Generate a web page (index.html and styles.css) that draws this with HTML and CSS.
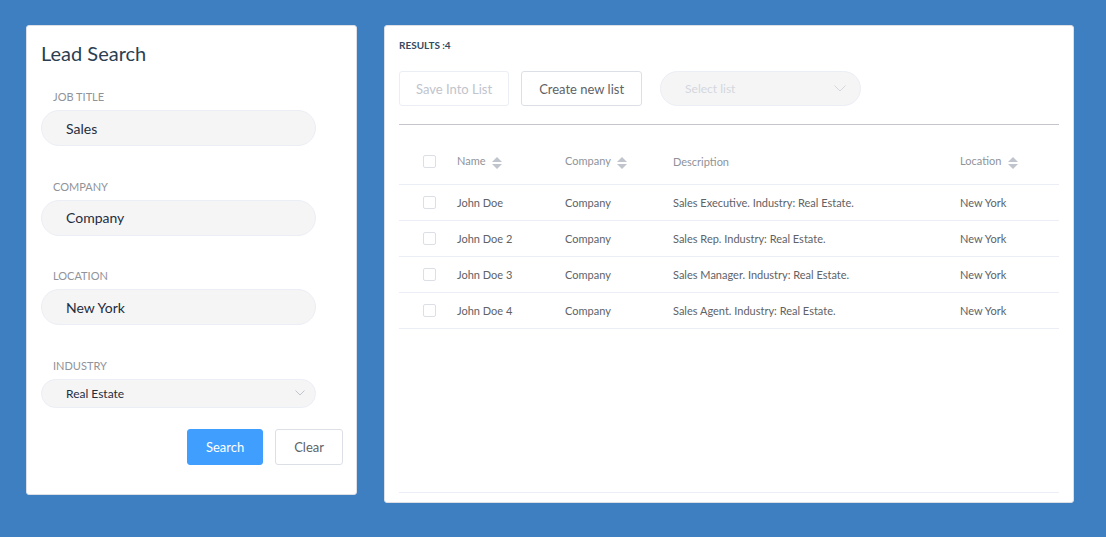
FILE: index.html
```html
<!DOCTYPE html>
<html lang="en">
<head>
  <meta charset="UTF-8">
  <meta name="viewport" content="width=device-width, initial-scale=1.0">
  <title>Lead Search</title>
  <link rel="stylesheet" href="styles.css">
</head>
<body>
  <div class="page">
    <div class="card search-card">
      <h2 class="card-title">Lead Search</h2>
      <div class="field">
        <label>Job Title</label>
        <div class="input">Sales</div>
      </div>
      <div class="field">
        <label>Company</label>
        <div class="input">Company</div>
      </div>
      <div class="field">
        <label>Location</label>
        <div class="input">New York</div>
      </div>
      <div class="field last">
        <label>Industry</label>
        <div class="input select small">Real Estate
          <svg class="chevron" width="10" height="6" viewBox="0 0 10 6"><path d="M0.5 0.5 L5 5 L9.5 0.5" fill="none" stroke="#c0c4cc" stroke-width="1"/></svg>
        </div>
      </div>
      <div class="actions">
        <button class="btn primary">Search</button>
        <button class="btn">Clear</button>
      </div>
    </div>

    <div class="card results-card">
      <div class="results-count">RESULTS :4</div>
      <div class="toolbar">
        <button class="btn disabled">Save Into List</button>
        <button class="btn">Create new list</button>
        <div class="list-select">Select list
          <svg class="chevron" width="12" height="7" viewBox="0 0 12 7"><path d="M0.5 0.5 L6 6 L11.5 0.5" fill="none" stroke="#d4d7dd" stroke-width="1"/></svg>
        </div>
      </div>
      <hr class="divider">
      <div class="table">
        <div class="row head">
          <div><span class="check"></span></div>
          <div>Name <span class="caret"></span></div>
          <div>Company <span class="caret"></span></div>
          <div>Description</div>
          <div>Location <span class="caret"></span></div>
        </div>
        <div class="row">
          <div><span class="check"></span></div>
          <div>John Doe</div>
          <div>Company</div>
          <div>Sales Executive. Industry: Real Estate.</div>
          <div>New York</div>
        </div>
        <div class="row">
          <div><span class="check"></span></div>
          <div>John Doe 2</div>
          <div>Company</div>
          <div>Sales Rep. Industry: Real Estate.</div>
          <div>New York</div>
        </div>
        <div class="row">
          <div><span class="check"></span></div>
          <div>John Doe 3</div>
          <div>Company</div>
          <div>Sales Manager. Industry: Real Estate.</div>
          <div>New York</div>
        </div>
        <div class="row">
          <div><span class="check"></span></div>
          <div>John Doe 4</div>
          <div>Company</div>
          <div>Sales Agent. Industry: Real Estate.</div>
          <div>New York</div>
        </div>
      </div>
    </div>
  </div>
</body>
</html>
```

FILE: styles.css
```css
body { font-family: Lato, 'Open Sans', Arial, sans-serif; background: #3d7fc1; margin: 0; padding: 0; }
.page { display: flex; align-items: flex-start; gap: 27px; padding: 25px 0 0 26px; }
.card { background: #fff; border: 1px solid #dcdfe6; border-radius: 3px; box-sizing: border-box; }

.search-card { width: 331px; height: 470px; padding: 14px 13px 0 14px; }
.card-title { margin: 0 0 24px 0; font-size: 20px; line-height: 26px; font-weight: 400; color: #2c3e50; }
.field { margin-bottom: 33.6px; }
.field.last { margin-bottom: 21px; }
.field label { display: block; margin: 0 0 6px 12px; font-size: 11px; line-height: 14px; text-transform: uppercase; color: #909399; }
.input { width: 275px; height: 36px; box-sizing: border-box; border: 1px solid #ebeef5; border-radius: 18px; background: #f5f5f6; padding: 0 24px; display: flex; align-items: center; font-size: 14px; color: #1f2d3d; }
.input.small { height: 29px; font-size: 12px; border-radius: 15px; }
.select { justify-content: space-between; padding-right: 10px; }
.actions { display: flex; justify-content: flex-end; gap: 12px; }

.btn { font-family: inherit; font-size: 13px; height: 36px; padding: 0 18px; background: #fff; color: #606266; border: 1px solid #dcdfe6; border-radius: 3px; cursor: pointer; }
.btn.primary { background: #409eff; border-color: #409eff; color: #fff; }
.btn.disabled { color: #c0c4cc; border-color: #ebeef5; cursor: not-allowed; }

.results-card { width: 690px; height: 478px; padding: 12px 14px 9px 14px; display: flex; flex-direction: column; }
.results-count { font-size: 10px; line-height: 14px; font-weight: 700; color: #34495e; }
.toolbar { display: flex; align-items: center; gap: 12px; margin-top: 19px; }
.toolbar .btn { height: 35px; padding: 0 17px; }
.toolbar .btn.disabled { padding: 0 16px; }
.list-select { margin-left: 6px; width: 201px; height: 35px; box-sizing: border-box; border: 1px solid #ebeef5; border-radius: 18px; background: #f5f5f6; padding: 0 14px 0 24px; display: flex; align-items: center; justify-content: space-between; font-size: 12px; color: #d4d7dd; }
.divider { border: 0; border-top: 1px solid #c4c6cc; margin: 18px 0 0 0; }

.table { flex: 1; border-bottom: 1px solid #ebeef5; }
.row { display: grid; grid-template-columns: 58px 108px 108px 287px 1fr; height: 36px; align-items: center; border-bottom: 1px solid #ebeef5; box-sizing: border-box; font-size: 11px; color: #606266; }
.row.head { height: 60px; padding-top: 14px; color: #909399; }
.row > div:first-child { padding-left: 24px; }
.check { display: block; width: 13px; height: 13px; box-sizing: border-box; border: 1px solid #dcdfe6; border-radius: 2px; background: #fff; }
.caret { display: inline-block; position: relative; width: 10px; height: 12px; vertical-align: middle; margin-left: 4px; }
.caret::before, .caret::after { content: ""; position: absolute; left: 0; border: 5px solid transparent; }
.caret::before { top: -5px; border-bottom-color: #c0c4cc; }
.caret::after { bottom: -5px; border-top-color: #c0c4cc; }
```
